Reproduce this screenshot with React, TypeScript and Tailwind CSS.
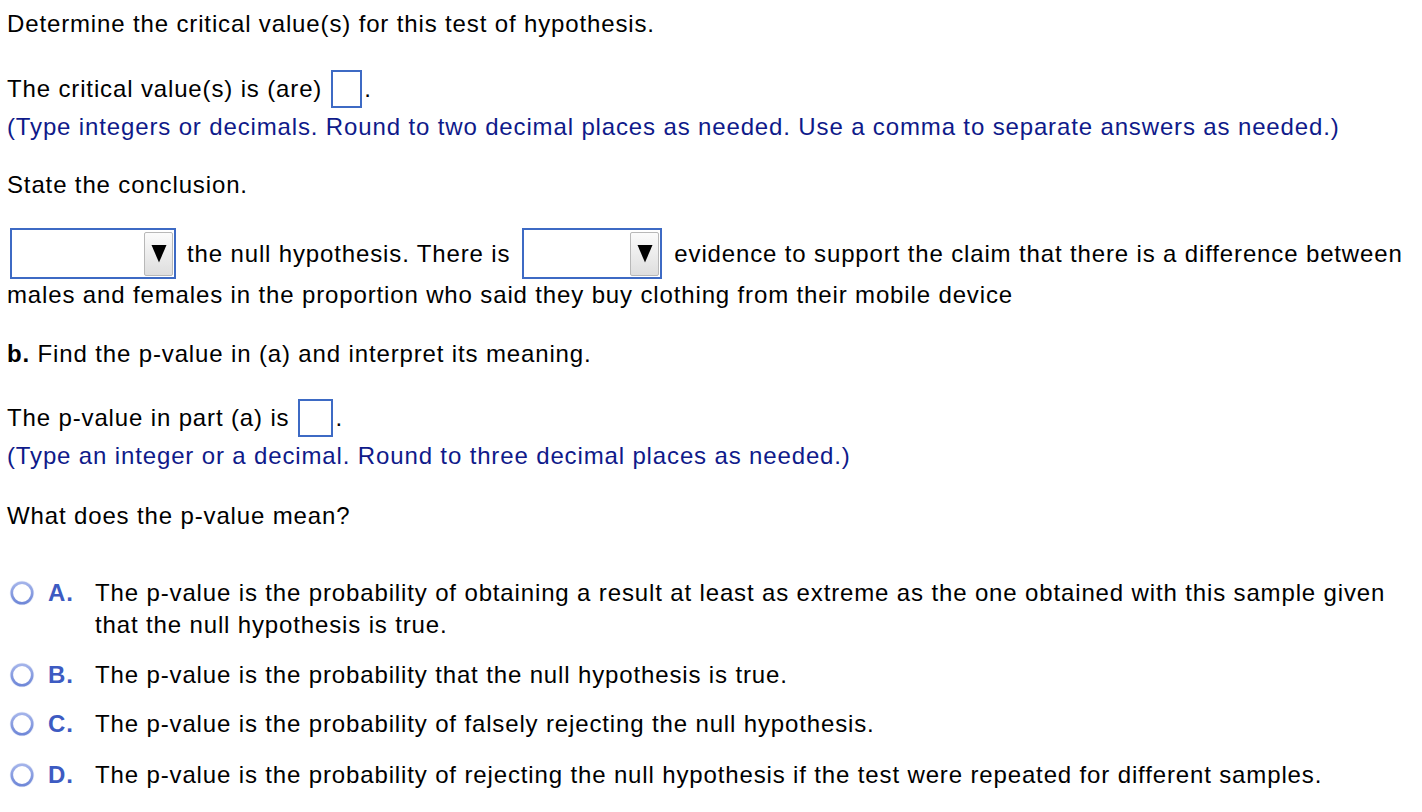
import React from "react";

const Box = ({ w = 31 }: { w?: number }) => (
  <span
    className="inline-block h-[38px] border-2 border-[#3d6ac4] bg-white mx-[9px]"
    style={{ width: w }}
  />
);

const Drop = ({ w }: { w: number }) => (
  <span
    className="inline-flex h-[51px] border-2 border-[#3d6ac4] bg-white items-center justify-end pr-[1px]"
    style={{ width: w }}
  >
    <span className="flex h-[44px] w-[29px] items-center justify-center border border-[#b8b8b8] bg-gradient-to-b from-[#fbfbfb] to-[#dedede] rounded-[2px]">
      <svg width="16" height="19" viewBox="0 0 16 19">
        <polygon points="0.5,1 15.5,1 8,18.5" fill="#000" />
      </svg>
    </span>
  </span>
);

const Radio = () => (
  <svg width="26" height="26" viewBox="0 0 26 26" className="shrink-0">
    <defs>
      <linearGradient id="rg" x1="0" y1="0" x2="0" y2="1">
        <stop offset="0" stopColor="#a3b3ea" />
        <stop offset="1" stopColor="#7088d8" />
      </linearGradient>
    </defs>
    <circle cx="13" cy="13" r="11.5" fill="none" stroke="#e6ebf8" strokeWidth="1.5" />
    <circle cx="13" cy="13" r="10.2" fill="#fff" stroke="url(#rg)" strokeWidth="2.6" />
  </svg>
);

const Option = ({ letter, children, mt }: { letter: string; children: React.ReactNode; mt: string }) => (
  <div className={`flex ${mt}`}>
    <div className="flex h-[32px] items-center pl-[9px] w-[48px]">
      <Radio />
    </div>
    <div className="w-[47px] font-bold text-[#3d5bc2]">{letter}</div>
    <div className="flex-1 pr-[20px]">{children}</div>
  </div>
);

export default function App() {
  return (
    <div
      className="min-h-[812px] w-[1422px] bg-white text-black text-[24px] leading-[32px] tracking-[0.86px] pl-[7px]"
      style={{ fontFamily: '"Liberation Sans", Arial, sans-serif' }}
    >
      <div className="pt-[8px]">Determine the critical value(s) for this test of hypothesis.</div>

      <div className="mt-[30px] flex h-[38px] items-center">
        The critical value(s) is (are)
        <Box />
        <span className="-ml-[7px]">.</span>
      </div>
      <div className="mt-[3px] text-[#0f1a8a]">
        (Type integers or decimals. Round to two decimal places as needed. Use a comma to separate answers as needed.)
      </div>

      <div className="mt-[26px]">State the conclusion.</div>

      <div className="mt-[27px] flex h-[51px] items-center whitespace-nowrap">
        <span className="ml-[3px] flex">
          <Drop w={166} />
        </span>
        <span className="ml-[11px]">the null hypothesis. There is</span>
        <span className="ml-[12px] flex">
          <Drop w={140} />
        </span>
        <span className="ml-[12px]">evidence to support the claim that there is a difference between</span>
      </div>
      <div>males and females in the proportion who said they buy clothing from their mobile device</div>

      <div className="mt-[27px]">
        <span className="font-bold">b.</span> Find the p-value in (a) and interpret its meaning.
      </div>

      <div className="mt-[29px] flex h-[38px] items-center">
        The p-value in part (a) is
        <Box w={35} />
        <span className="-ml-[7px]">.</span>
      </div>
      <div className="mt-[3px] text-[#0f1a8a]">
        (Type an integer or a decimal. Round to three decimal places as needed.)
      </div>

      <div className="mt-[28px]">What does the p-value mean?</div>

      <div className="-ml-[7px]">
        <Option letter="A." mt="mt-[45px]">
          The p-value is the probability of obtaining a result at least as extreme as the one obtained with this sample given that the null hypothesis is true.
        </Option>
        <Option letter="B." mt="mt-[18px]">
          The p-value is the probability that the null hypothesis is true.
        </Option>
        <Option letter="C." mt="mt-[17px]">
          The p-value is the probability of falsely rejecting the null hypothesis.
        </Option>
        <Option letter="D." mt="mt-[19px]">
          The p-value is the probability of rejecting the null hypothesis if the test were repeated for different samples.
        </Option>
      </div>
    </div>
  );
}
